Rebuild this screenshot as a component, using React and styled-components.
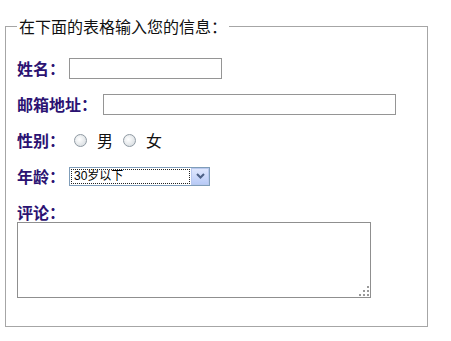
import React from "react";
import styled, { createGlobalStyle } from "styled-components";

const GlobalStyle = createGlobalStyle`
  html, body {
    margin: 0;
    padding: 0;
    background: #fff;
  }
  body {
    font-family: "Noto Sans CJK SC", "Liberation Sans", sans-serif;
  }
`;

const Page = styled.div`
  padding: 16px 0 0 5px;
  width: 451px;
  height: 341px;
  box-sizing: border-box;
  overflow: hidden;
`;

const Fieldset = styled.fieldset`
  box-sizing: border-box;
  width: 423px;
  height: 311px;
  margin: 0;
  padding: 4px 11px 0 11px;
  border: 1px solid #a6a6a6;
`;

const Legend = styled.legend`
  padding: 0 2px;
  font-size: 16px;
  line-height: 20px;
  color: #111;
`;

const Form = styled.div`
  display: flex;
  flex-direction: column;
  gap: 14px;
  padding-top: 17px;
`;

const Row = styled.div`
  display: flex;
  align-items: center;
  height: ${(p) => p.$h || 22}px;
`;

const Label = styled.span`
  font-size: 16px;
  font-weight: bold;
  color: #2b1272;
  white-space: nowrap;
  margin-right: ${(p) => p.$gap || 4}px;
`;

const TextInput = styled.input`
  box-sizing: border-box;
  width: ${(p) => p.$w}px;
  height: 21px;
  margin: 0;
  padding: 1px 3px;
  border: 1px solid #959595;
  font-size: 12px;
  outline: none;
`;

const Radio = styled.span`
  box-sizing: border-box;
  width: 13px;
  height: 13px;
  border-radius: 50%;
  border: 1px solid #8f9aa3;
  background: radial-gradient(circle at 40% 40%, #ffffff 0%, #dfe3e6 70%, #c9cfd4 100%);
  margin: 0 10px 0 ${(p) => p.$ml || 0}px;
`;

const Choice = styled.span`
  font-size: 16px;
  color: #111;
`;

const Select = styled.div`
  box-sizing: border-box;
  display: flex;
  width: 141px;
  height: 19px;
  border: 1px solid #7f9db9;
  background: #fff;
`;

const SelectValue = styled.span`
  flex: 1;
  margin: 1px;
  padding-left: 2px;
  border: 1px dotted #222;
  font-family: "Liberation Sans", "Noto Sans CJK SC", sans-serif;
  font-size: 12px;
  line-height: 13px;
  color: #000;
`;

const SelectButton = styled.span`
  width: 16px;
  display: flex;
  align-items: center;
  justify-content: center;
  border: 1px solid #b9c9ef;
  background: linear-gradient(#dfe7fd, #b9cbf7);
`;

const Comment = styled.div`
  position: relative;
  width: 354px;
  height: 76px;
`;

const TextArea = styled.textarea`
  box-sizing: border-box;
  display: block;
  width: 100%;
  height: 100%;
  margin: 0;
  border: 1px solid #8f8f8f;
  resize: none;
  outline: none;
`;

const Grip = styled.svg`
  position: absolute;
  right: 2px;
  bottom: 2px;
`;

export default function App() {
  return (
    <>
      <GlobalStyle />
      <Page>
        <Fieldset>
          <Legend>在下面的表格输入您的信息：</Legend>
          <Form>
            <Row>
              <Label $gap={4}>姓名：</Label>
              <TextInput $w={153} />
            </Row>
            <Row>
              <Label $gap={6}>邮箱地址：</Label>
              <TextInput $w={293} />
            </Row>
            <Row>
              <Label $gap={9}>性别：</Label>
              <Radio />
              <Choice>男</Choice>
              <Radio $ml={10} />
              <Choice>女</Choice>
            </Row>
            <Row>
              <Label $gap={4}>年龄：</Label>
              <Select>
                <SelectValue>30岁以下</SelectValue>
                <SelectButton>
                  <svg width="9" height="6" viewBox="0 0 9 6">
                    <path d="M1 1 L4.5 4.5 L8 1" fill="none" stroke="#4d6185" strokeWidth="2" />
                  </svg>
                </SelectButton>
              </Select>
            </Row>
            <Row $h={21}>
              <Label>评论：</Label>
            </Row>
          </Form>
          <Comment>
            <TextArea />
            <Grip width="10" height="10" viewBox="0 0 10 10">
              <g fill="#9a9a9a">
                <rect x="8" y="0" width="2" height="2" />
                <rect x="4" y="4" width="2" height="2" />
                <rect x="8" y="4" width="2" height="2" />
                <rect x="0" y="8" width="2" height="2" />
                <rect x="4" y="8" width="2" height="2" />
                <rect x="8" y="8" width="2" height="2" />
              </g>
            </Grip>
          </Comment>
        </Fieldset>
      </Page>
    </>
  );
}
